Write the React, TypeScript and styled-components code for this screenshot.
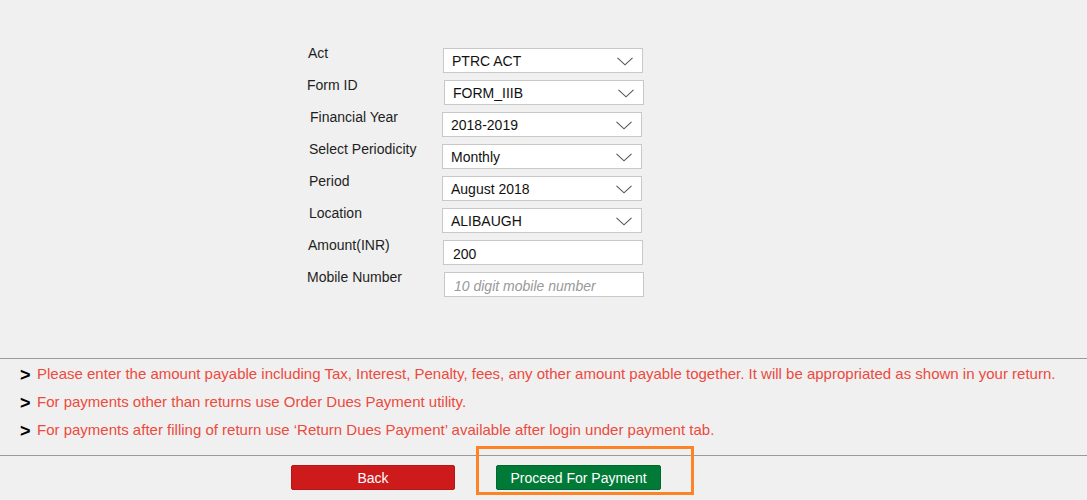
import React from "react";
import styled, { createGlobalStyle } from "styled-components";

const GlobalStyle = createGlobalStyle`
	html, body {
		margin: 0;
		padding: 0;
		background: #f0f0f0;
		font-family: "Liberation Sans", Arial, sans-serif;
		font-size: 14px;
		color: #222;
	}
`;

interface FieldRow {
	label: string;
	value: string;
	kind: "select" | "input";
	placeholder?: string;
	labelX: number;
	fieldX: number;
}

const rows: FieldRow[] = [
	{ label: "Act", value: "PTRC ACT", kind: "select", labelX: 1, fieldX: 1 },
	{ label: "Form ID", value: "FORM_IIIB", kind: "select", labelX: 0, fieldX: 2 },
	{ label: "Financial Year", value: "2018-2019", kind: "select", labelX: 3, fieldX: 0 },
	{ label: "Select Periodicity", value: "Monthly", kind: "select", labelX: 2, fieldX: 0 },
	{ label: "Period", value: "August 2018", kind: "select", labelX: 2, fieldX: 0 },
	{ label: "Location", value: "ALIBAUGH", kind: "select", labelX: 2, fieldX: 0 },
	{ label: "Amount(INR)", value: "200", kind: "input", labelX: 1, fieldX: 1 },
	{
		label: "Mobile Number",
		value: "",
		kind: "input",
		placeholder: "10 digit mobile number",
		labelX: 0,
		fieldX: 2
	}
];

const notes = [
	"Please enter the amount payable including Tax, Interest, Penalty, fees, any other amount payable together. It will be appropriated as shown in your return.",
	"For payments other than returns use Order Dues Payment utility.",
	"For payments after filling of return use \u2018Return Dues Payment\u2019 available after login under payment tab."
];

const Page = styled.div`
	width: 1087px;
	height: 500px;
	overflow: hidden;
`;

const Form = styled.div`
	display: flex;
	flex-direction: column;
	padding: 45px 0 0 307px;
	height: 313px;
	box-sizing: border-box;
`;

const Row = styled.div`
	display: flex;
	align-items: flex-start;
	height: 32px;
`;

const Label = styled.div<{ $indent: number }>`
	width: 135px;
	box-sizing: border-box;
	padding-left: ${(p) => p.$indent}px;
	line-height: 16px;
	color: #1e1e1e;
`;

const FieldBox = styled.div<{ $nudge: number }>`
	margin: 3px 0 0 ${(p) => p.$nudge}px;
	width: 200px;
	height: 25px;
	box-sizing: border-box;
	border: 1px solid #c8c8c8;
	background: #fff;
	display: flex;
	align-items: center;
	justify-content: space-between;
	padding: 1px 9px 0 8px;
	line-height: 22px;
	color: #111;
`;

const TextField = styled.input<{ $nudge: number }>`
	margin: 3px 0 0 ${(p) => p.$nudge}px;
	width: 200px;
	height: 25px;
	box-sizing: border-box;
	border: 1px solid #c8c8c8;
	background: #fff;
	padding: 2px 9px 0;
	font-family: "Liberation Sans", Arial, sans-serif;
	font-size: 14px;
	color: #111;
	outline: none;

	&::placeholder {
		color: #999;
		font-style: italic;
	}
`;

const Notes = styled.ul`
	list-style: none;
	margin: 45px 0 0;
	padding: 1px 0 11px 20px;
	border-top: 1px solid #9a9a9a;
	border-bottom: 1px solid #9a9a9a;
`;

const Note = styled.li`
	display: flex;
	align-items: center;
	height: 28px;
	line-height: 28px;
	font-size: 15px;
	color: #ec4a3e;
	white-space: nowrap;
`;

const Arrow = styled.span`
	width: 17px;
	font-size: 18px;
	font-weight: bold;
	color: #000;
	line-height: 28px;
	margin-top: 2px;
`;

const ButtonRow = styled.div`
	display: flex;
	align-items: flex-start;
	padding: 9px 0 0 291px;
`;

const Button = styled.button<{ $tone: "back" | "go" }>`
	width: ${(p) => (p.$tone === "back" ? 164 : 165)}px;
	height: 25px;
	border-radius: 2px;
	border: 1px solid ${(p) => (p.$tone === "back" ? "#b81616" : "#006a2c")};
	background: ${(p) => (p.$tone === "back" ? "#cd1a1a" : "#007a36")};
	color: #fff;
	font-family: "Liberation Sans", Arial, sans-serif;
	font-size: 14px;
	padding: 0;
	cursor: pointer;
`;

const Highlight = styled.div`
	margin: -19px 0 0 21px;
	padding: 16px 30px 2px 17px;
	border: 3px solid #fd8326;
`;

const Chevron = () => (
	<svg width="16" height="9" viewBox="0 0 16 9">
		<polyline points="0.5,0.8 8,7.8 15.5,0.8" fill="none" stroke="#555" strokeWidth="1.1" />
	</svg>
);

const App = () => {
	return (
		<Page>
			<GlobalStyle />
			<Form>
				{rows.map((row) => (
					<Row key={row.label}>
						<Label $indent={row.labelX}>{row.label}</Label>
						{row.kind === "select" ? (
							<FieldBox $nudge={row.fieldX}>
								<span>{row.value}</span>
								<Chevron />
							</FieldBox>
						) : (
							<TextField
								$nudge={row.fieldX}
								defaultValue={row.value}
								placeholder={row.placeholder}
							/>
						)}
					</Row>
				))}
			</Form>
			<Notes>
				{notes.map((note) => (
					<Note key={note}>
						<Arrow>&gt;</Arrow>
						{note}
					</Note>
				))}
			</Notes>
			<ButtonRow>
				<Button $tone="back">Back</Button>
				<Highlight>
					<Button $tone="go">Proceed For Payment</Button>
				</Highlight>
			</ButtonRow>
		</Page>
	);
};

export default App;
